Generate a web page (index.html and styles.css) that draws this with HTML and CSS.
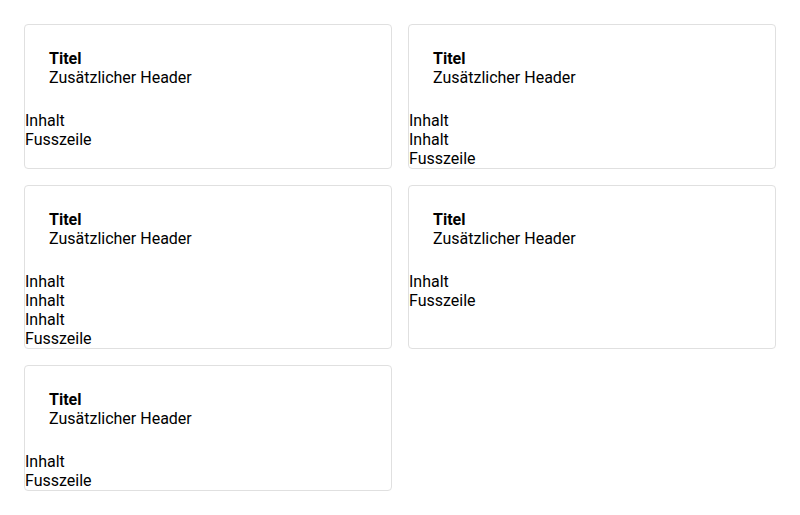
FILE: index.html
```html
<!DOCTYPE html>
<html lang="de">
<head>
<meta charset="utf-8">
<title>Karten</title>
<link rel="stylesheet" href="styles.css">
</head>
<body>
<div class="grid">
  <div class="card">
    <div class="card-header"><div class="title">Titel</div><div class="subtitle">Zusätzlicher Header</div></div>
    <div class="card-body"><div>Inhalt</div></div>
    <div class="card-footer">Fusszeile</div>
  </div>
  <div class="card">
    <div class="card-header"><div class="title">Titel</div><div class="subtitle">Zusätzlicher Header</div></div>
    <div class="card-body"><div>Inhalt</div><div>Inhalt</div></div>
    <div class="card-footer">Fusszeile</div>
  </div>
  <div class="card">
    <div class="card-header"><div class="title">Titel</div><div class="subtitle">Zusätzlicher Header</div></div>
    <div class="card-body"><div>Inhalt</div><div>Inhalt</div><div>Inhalt</div></div>
    <div class="card-footer">Fusszeile</div>
  </div>
  <div class="card">
    <div class="card-header"><div class="title">Titel</div><div class="subtitle">Zusätzlicher Header</div></div>
    <div class="card-body"><div>Inhalt</div></div>
    <div class="card-footer">Fusszeile</div>
  </div>
  <div class="card">
    <div class="card-header"><div class="title">Titel</div><div class="subtitle">Zusätzlicher Header</div></div>
    <div class="card-body"><div>Inhalt</div></div>
    <div class="card-footer">Fusszeile</div>
  </div>
</div>
</body>
</html>
```

FILE: styles.css
```css
html, body {
  margin: 0;
  padding: 0;
  background: #ffffff;
}
body {
  font-family: Roboto, "Liberation Sans", sans-serif;
  font-size: 16px;
  color: #000000;
}
.grid {
  display: grid;
  grid-template-columns: 1fr 1fr;
  gap: 16px;
  padding: 24px;
  align-items: stretch;
}
.card {
  border: 1px solid #e0e0e0;
  border-radius: 4px;
  display: flex;
  flex-direction: column;
}
.card-header {
  padding: 24px;
}
.title {
  font-weight: 700;
}
```
